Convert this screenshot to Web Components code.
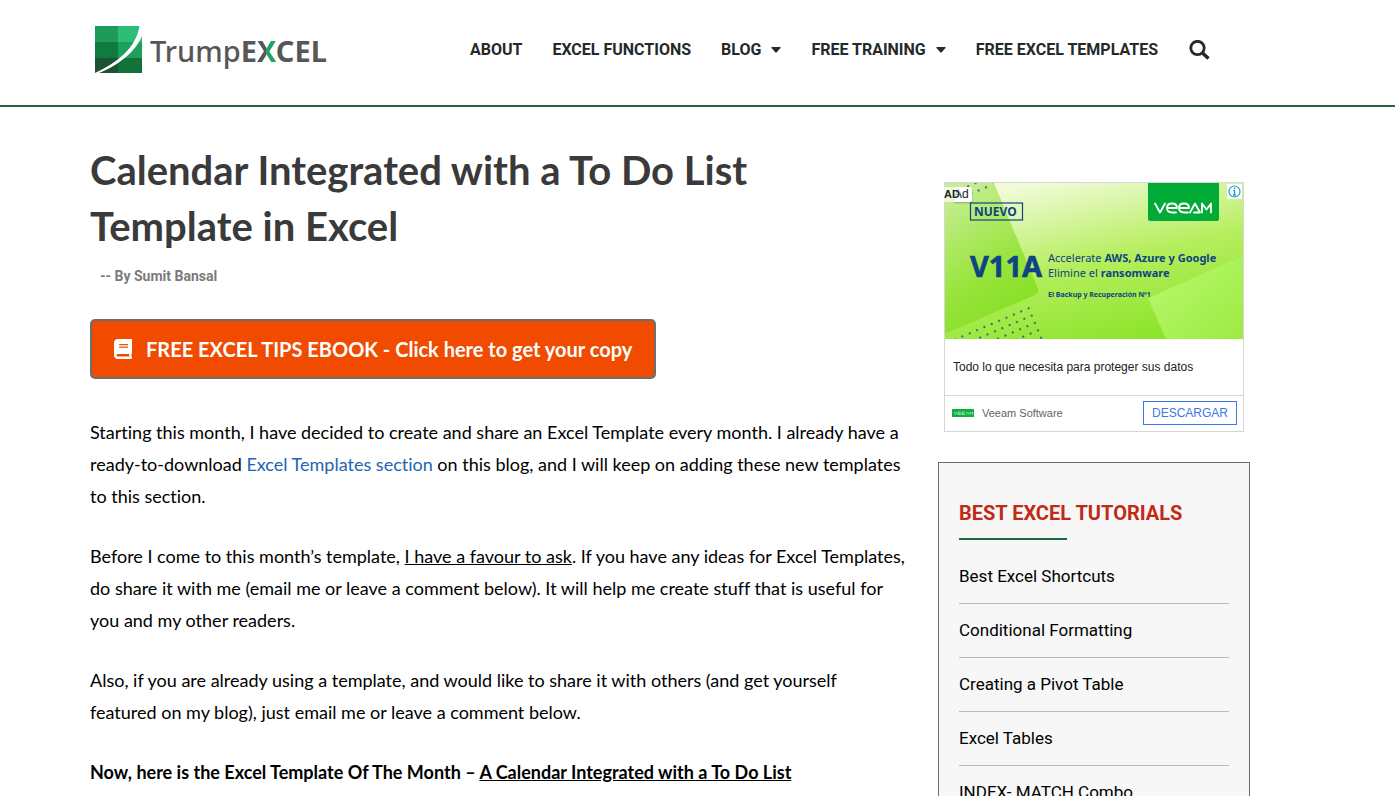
<!DOCTYPE html>
<html lang="en">
<head>
<meta charset="utf-8">
<meta name="viewport" content="width=device-width, initial-scale=1">
<title>Calendar Integrated with a To Do List Template in Excel</title>
<style>
    body {
        margin: 0;
        background: #fff;
        color: #000;
        font-family: Lato, sans-serif;
        font-variant-ligatures: none;
        --green: #1d6b40;
        --gutter-left: 90px;
        --gutter-right: 145px;
    }
    .page {
        display: grid;
        grid-template-columns: minmax(0, 1fr) 312px;
        column-gap: 32px;
        padding: 0 var(--gutter-right) 0 var(--gutter-left);
    }
    aside {
        padding-top: 75px;
    }
    p {
        margin: 0 0 28px;
        font-size: 18px;
        line-height: 32px;
    }
    p a {
        color: #1e64b4;
        text-decoration: none;
    }
</style>
</head>
<body>
<site-header>
    <site-logo slot="logo"></site-logo>
    <nav-item href="#about">ABOUT</nav-item>
    <nav-item href="#functions">EXCEL FUNCTIONS</nav-item>
    <nav-item href="#blog" menu>BLOG</nav-item>
    <nav-item href="#training" menu>FREE TRAINING</nav-item>
    <nav-item href="#templates">FREE EXCEL TEMPLATES</nav-item>
</site-header>
<div class="page">
    <blog-post>
        <span slot="title">Calendar Integrated with a To Do List Template in Excel</span>
        <span slot="byline">-- By Sumit Bansal</span>
        <ebook-button slot="cta">FREE EXCEL TIPS EBOOK - Click here to get your copy</ebook-button>
        <p>Starting this month, I have decided to create and share an Excel Template every month. I already have a ready-to-download <a href="#templates">Excel Templates section</a> on this blog, and I will keep on adding these new templates to this section.</p>
        <p>Before I come to this month’s template, <u>I have a favour to ask</u>. If you have any ideas for Excel Templates, do share it with me (email me or leave a comment below). It will help me create stuff that is useful for you and my other readers.</p>
        <p>Also, if you are already using a template, and would like to share it with others (and get yourself featured on my blog), just email me or leave a comment below.</p>
        <p><b>Now, here is the Excel Template Of The Month – <u>A Calendar Integrated with a To Do List</u></b></p>
    </blog-post>
    <aside>
        <ad-card></ad-card>
        <link-box>
            <span slot="title">BEST EXCEL TUTORIALS</span>
            <link-row href="#shortcuts">Best Excel Shortcuts</link-row>
            <link-row href="#formatting">Conditional Formatting</link-row>
            <link-row href="#pivot">Creating a Pivot Table</link-row>
            <link-row href="#tables">Excel Tables</link-row>
            <link-row href="#index-match">INDEX- MATCH Combo</link-row>
        </link-box>
    </aside>
</div>

<script>
class SiteHeader extends HTMLElement {
    connectedCallback() {
        this.attachShadow({ mode: 'open' });
        this.shadowRoot.innerHTML = `
            <style>
                :host {
                    display: block;
                    border-bottom: 2px solid var(--green);
                }
                header {
                    display: flex;
                    align-items: center;
                    justify-content: space-between;
                    min-height: 105px;
                    box-sizing: border-box;
                    padding: 0 185px 6px 94px;
                }
                nav {
                    display: flex;
                    align-items: center;
                    gap: 30px;
                }
                button {
                    display: flex;
                    padding: 0;
                    border: 0;
                    background: none;
                    color: #242a2a;
                    cursor: pointer;
                }
            </style>
            <header>
                <slot name="logo"></slot>
                <nav>
                    <slot></slot>
                    <button type="button" aria-label="Search">
                        <svg width="22" height="20" viewBox="0 0 22 20" fill="none" stroke="currentColor">
                            <circle cx="9.500" cy="8" r="6.7" stroke-width="2.8"/>
                            <path d="M14.500 13l6 5.500" stroke-width="3.600"/>
                        </svg>
                    </button>
                </nav>
            </header>
        `;
    }
}
customElements.define('site-header', SiteHeader);

class SiteLogo extends HTMLElement {
    connectedCallback() {
        this.attachShadow({ mode: 'open' });
        this.shadowRoot.innerHTML = `
            <style>
                :host {
                    display: block;
                }
                a {
                    display: flex;
                    align-items: center;
                    gap: 8px;
                    color: #555857;
                    font: 500 29px/48px "Noto Sans", sans-serif;
                    text-decoration: none;
                }
                svg {
                    display: block;
                }
                .word {
                    padding-top: 3px;
                }
                b {
                    font-weight: 700;
                }
                .x {
                    background: linear-gradient(90deg, #555857 50%, #1fa463 50%);
                    -webkit-background-clip: text;
                    background-clip: text;
                    color: transparent;
                }
            </style>
            <a href="#home">
                <svg width="48" height="48" viewBox="0 0 48 48">
                    <path fill="#1f9a5a" d="M1 0h23v16H1z"/>
                    <path fill="#2dbd77" d="M24 0h24v16H24z"/>
                    <path fill="#117a3e" d="M1 16h23v16H1z"/>
                    <path fill="#1e9f5c" d="M24 16h24v16H24z"/>
                    <path fill="#1c5330" d="M1 32h23v15H1z"/>
                    <path fill="#13713a" d="M24 32h24v15H24z"/>
                    <path fill="#fff" d="M1 47C23 37 42 22 45.500 0H48v10C42 25 25 39 5 47z"/>
                </svg>
                <span class="word">Trump<b>E<span class="x">X</span>CEL</b></span>
            </a>
        `;
    }
}
customElements.define('site-logo', SiteLogo);

class NavItem extends HTMLElement {
    connectedCallback() {
        const caret = this.hasAttribute('menu')
            ? '<svg width="10" height="6" viewBox="0 0 10 6"><path fill="currentColor" d="M1 0h8q1 0 .5 1L5.700 5.300q-.7.700-1.400 0L.5 1Q0 0 1 0z"/></svg>'
            : '';
        this.attachShadow({ mode: 'open' });
        this.shadowRoot.innerHTML = `
            <style>
                :host {
                    display: block;
                }
                a {
                    display: flex;
                    align-items: center;
                    gap: 10px;
                    color: #242a2a;
                    font: 700 16px/24px Roboto, sans-serif;
                    text-decoration: none;
                    white-space: nowrap;
                }
            </style>
            <a href="${this.getAttribute('href')}"><slot></slot>${caret}</a>
        `;
    }
}
customElements.define('nav-item', NavItem);

class BlogPost extends HTMLElement {
    connectedCallback() {
        this.attachShadow({ mode: 'open' });
        this.shadowRoot.innerHTML = `
            <style>
                :host {
                    display: block;
                    padding-top: 35px;
                }
                h1 {
                    max-width: 700px;
                    margin: 0;
                    color: #3a3a3a;
                    font-size: 40px;
                    font-weight: 700;
                    line-height: 56px;
                }
                .byline {
                    margin: 11px 10px 32px;
                    color: #7a7a7a;
                    font: 700 14px/22px Roboto, sans-serif;
                }
                .cta {
                    margin-bottom: 37px;
                }
            </style>
            <article>
                <h1><slot name="title"></slot></h1>
                <div class="byline"><slot name="byline"></slot></div>
                <div class="cta"><slot name="cta"></slot></div>
                <slot></slot>
            </article>
        `;
    }
}
customElements.define('blog-post', BlogPost);

class EbookButton extends HTMLElement {
    connectedCallback() {
        this.attachShadow({ mode: 'open' });
        this.shadowRoot.innerHTML = `
            <style>
                :host {
                    display: flex;
                }
                a {
                    display: flex;
                    align-items: center;
                    gap: 14px;
                    padding: 16px 22px;
                    border: 2px solid #6b706c;
                    border-radius: 5px;
                    background: #f04b00;
                    color: #fff;
                    font-size: 20px;
                    font-weight: 700;
                    line-height: 24px;
                    text-decoration: none;
                }
            </style>
            <a href="#ebook">
                <svg width="18" height="20" viewBox="0 0 448 512" preserveAspectRatio="none">
                    <path fill="currentColor" d="M448 360V24c0-13.300-10.700-24-24-24H96C43 0 0 43 0 96v320c0 53 43 96 96 96h328c13.300 0 24-10.700 24-24v-16c0-7.500-3.500-14.300-8.900-18.700-4.200-15.400-4.200-59.300 0-74.700 5.400-4.300 8.900-11.100 8.900-18.600zM128 134c0-3.300 2.700-6 6-6h212c3.300 0 6 2.700 6 6v20c0 3.300-2.700 6-6 6H134c-3.300 0-6-2.700-6-6v-20zm0 64c0-3.300 2.700-6 6-6h212c3.300 0 6 2.700 6 6v20c0 3.300-2.700 6-6 6H134c-3.300 0-6-2.700-6-6v-20zm253.400 250H96c-17.700 0-32-14.300-32-32 0-17.600 14.400-32 32-32h285.400c-1.900 17.100-1.900 46.900 0 64z"/>
                </svg>
                <span><slot></slot></span>
            </a>
        `;
    }
}
customElements.define('ebook-button', EbookButton);

class AdCard extends HTMLElement {
    connectedCallback() {
        this.attachShadow({ mode: 'open' });
        this.shadowRoot.innerHTML = `
            <style>
                :host {
                    display: block;
                    position: relative;
                    box-sizing: border-box;
                    margin: 0 6px 30px;
                    border: 1px solid #d6d6d6;
                    font-family: "Liberation Sans", Arial, sans-serif;
                }
                .banner {
                    display: block;
                    width: 100%;
                }
                .banner text {
                    font-family: "Noto Sans", sans-serif;
                    fill: #0e4384;
                }
                .tag {
                    position: absolute;
                    top: 4px;
                    left: -1px;
                    display: flex;
                    font-size: 11px;
                    line-height: 15px;
                    font-weight: 700;
                    color: #222;
                }
                .tag b {
                    z-index: 1;
                    background: #ffffffb0;
                }
                .tag span {
                    margin-left: -6px;
                    padding-right: 3px;
                    border-radius: 0 2px 2px 0;
                    background: #fff;
                    font-weight: 400;
                    font-size: 12px;
                    box-shadow: 0 1px 2px #0004;
                }
                .info {
                    position: absolute;
                    top: 1px;
                    right: 1px;
                    display: flex;
                    background: #fff;
                }
                .headline {
                    padding: 20px 8px;
                    border-bottom: 1px solid #d6d6d6;
                    color: #212121;
                    font-size: 12px;
                    line-height: 16px;
                }
                .foot {
                    display: flex;
                    align-items: center;
                    gap: 8px;
                    padding: 5px 6px 6px 7px;
                    color: #636363;
                    font-size: 11px;
                    line-height: 14px;
                }
                .get {
                    margin-left: auto;
                    padding: 0 8px;
                    border: 1px solid #3b78e7;
                    color: #3b78e7;
                    font-size: 12px;
                    line-height: 22px;
                    text-decoration: none;
                }
            </style>
            <svg class="banner" viewBox="0 0 298 156">
                <defs>
                    <linearGradient id="sky" x1=".3" y1="0" x2=".7" y2="1">
                        <stop offset="0" stop-color="#f1fbd8"/>
                        <stop offset=".5" stop-color="#b6ee5e"/>
                        <stop offset="1" stop-color="#8be42a"/>
                    </linearGradient>
                    <linearGradient id="leaf" x1=".2" y1="0" x2=".6" y2="1">
                        <stop offset="0" stop-color="#c7ee95"/>
                        <stop offset=".6" stop-color="#98e43b"/>
                        <stop offset="1" stop-color="#83df22"/>
                    </linearGradient>
                    <linearGradient id="tile" x1="0" y1="0" x2="1" y2="1">
                        <stop offset="0" stop-color="#bafa70"/>
                        <stop offset="1" stop-color="#9dea42"/>
                    </linearGradient>
                    <pattern id="dots" width="8" height="8" patternUnits="userSpaceOnUse" patternTransform="rotate(-23)">
                        <circle cx="4" cy="4" r="1.100" fill="#16558a"/>
                    </pattern>
                </defs>
                <rect width="298" height="156" fill="url(#sky)"/>
                <path fill="url(#leaf)" d="M0 0h49l44 106q1 4-3 6L0 151z"/>
                <path fill="url(#tile)" d="M203 115l95-42v83h-77z"/>
                <path fill="url(#dots)" d="M8 156l78-34 12 34zM20 0h28l-8 8-14 4z"/>
                <rect x="25.500" y="20" width="52" height="17" fill="none" stroke="#0e4384" stroke-width="1.200"/>
                <text x="29" y="33" font-size="12" font-weight="700">NUEVO</text>
                <path fill="#00ab36" d="M203 0h71v36q0 2-2 2h-67q-2 0-2-2z"/>
                <g fill="none" stroke="#fff" stroke-width="1.800" stroke-linejoin="round" stroke-linecap="round" aria-label="veeam">
                    <path d="M210 20.500l5 9 5-9"/>
                    <path d="M222.500 25h9.500q0-4.500-5-4.500t-5 4.500 5 4.500h4M234.500 25h9.500q0-4.500-5-4.500t-5 4.500 5 4.500h4"/>
                    <path d="M245 29.500l5-9 5 9h-6M257 29.500v-9l4.500 6 4.500-6v9"/>
                </g>
                <text x="25" y="94" font-size="29" font-weight="700" stroke="#0e4384" stroke-width=".6">V11A</text>
                <text x="103" y="79" font-size="11">Accelerate <tspan font-weight="700">AWS, Azure y Google</tspan></text>
                <text x="103" y="94" font-size="11">Elimine el <tspan font-weight="700">ransomware</tspan></text>
                <text x="103" y="114" font-size="7" font-weight="700">El Backup y Recuperación Nº1</text>
            </svg>
            <div class="tag"><b>AD</b><span>Ad</span></div>
            <a class="info" href="#adchoices" aria-label="Ad information">
                <svg width="15" height="15" viewBox="0 0 15 15">
                    <circle cx="7.500" cy="7.500" r="5.500" fill="none" stroke="#1a9fd0" stroke-width="1.200"/>
                    <path d="M7.500 3.500v1.500M6.300 6.500h1.200v4.500M6 11h3" fill="none" stroke="#1a9fd0" stroke-width="1.300"/>
                </svg>
            </a>
            <div class="headline">Todo lo que necesita para proteger sus datos</div>
            <div class="foot">
                <svg width="22" height="8" viewBox="0 0 22 8">
                    <rect width="22" height="8" fill="#12ad43"/>
                    <path d="M2 3l1.500 2.500L5 3M9 3H6v2.500h3M6 4.300h2.500M13 3h-3v2.500h3M10 4.300h2.500M14 5.500L15.500 3 17 5.500M18 5.500V3l1.200 1.500L20.500 3v2.500" fill="none" stroke="#b9e8c8" stroke-width=".7"/>
                </svg>
                <span>Veeam Software</span>
                <a class="get" href="#download">DESCARGAR</a>
            </div>
        `;
    }
}
customElements.define('ad-card', AdCard);

class LinkBox extends HTMLElement {
    connectedCallback() {
        this.attachShadow({ mode: 'open' });
        this.shadowRoot.innerHTML = `
            <style>
                :host {
                    display: block;
                    padding: 36px 20px;
                    border: 1px solid #6b6d70;
                    background: #f7f7f7;
                    font-family: Roboto, sans-serif;
                }
                h2 {
                    margin: 0;
                    color: #c02b16;
                    font-size: 20px;
                    font-weight: 700;
                    line-height: 28px;
                }
                h2::after {
                    content: "";
                    display: block;
                    width: 40%;
                    height: 2px;
                    margin: 11px 0 10px;
                    background: var(--green);
                }
            </style>
            <h2><slot name="title"></slot></h2>
            <div role="list"><slot></slot></div>
        `;
    }
}
customElements.define('link-box', LinkBox);

class LinkRow extends HTMLElement {
    connectedCallback() {
        this.setAttribute('role', 'listitem');
        this.attachShadow({ mode: 'open' });
        this.shadowRoot.innerHTML = `
            <style>
                :host {
                    display: block;
                    padding: 14px 0 15px;
                    border-bottom: 1px solid #bbb;
                }
                a {
                    display: block;
                    color: #000;
                    font-size: 17px;
                    line-height: 24px;
                    text-decoration: none;
                }
            </style>
            <a href="${this.getAttribute('href')}"><slot></slot></a>
        `;
    }
}
customElements.define('link-row', LinkRow);
</script>
</body>
</html>
